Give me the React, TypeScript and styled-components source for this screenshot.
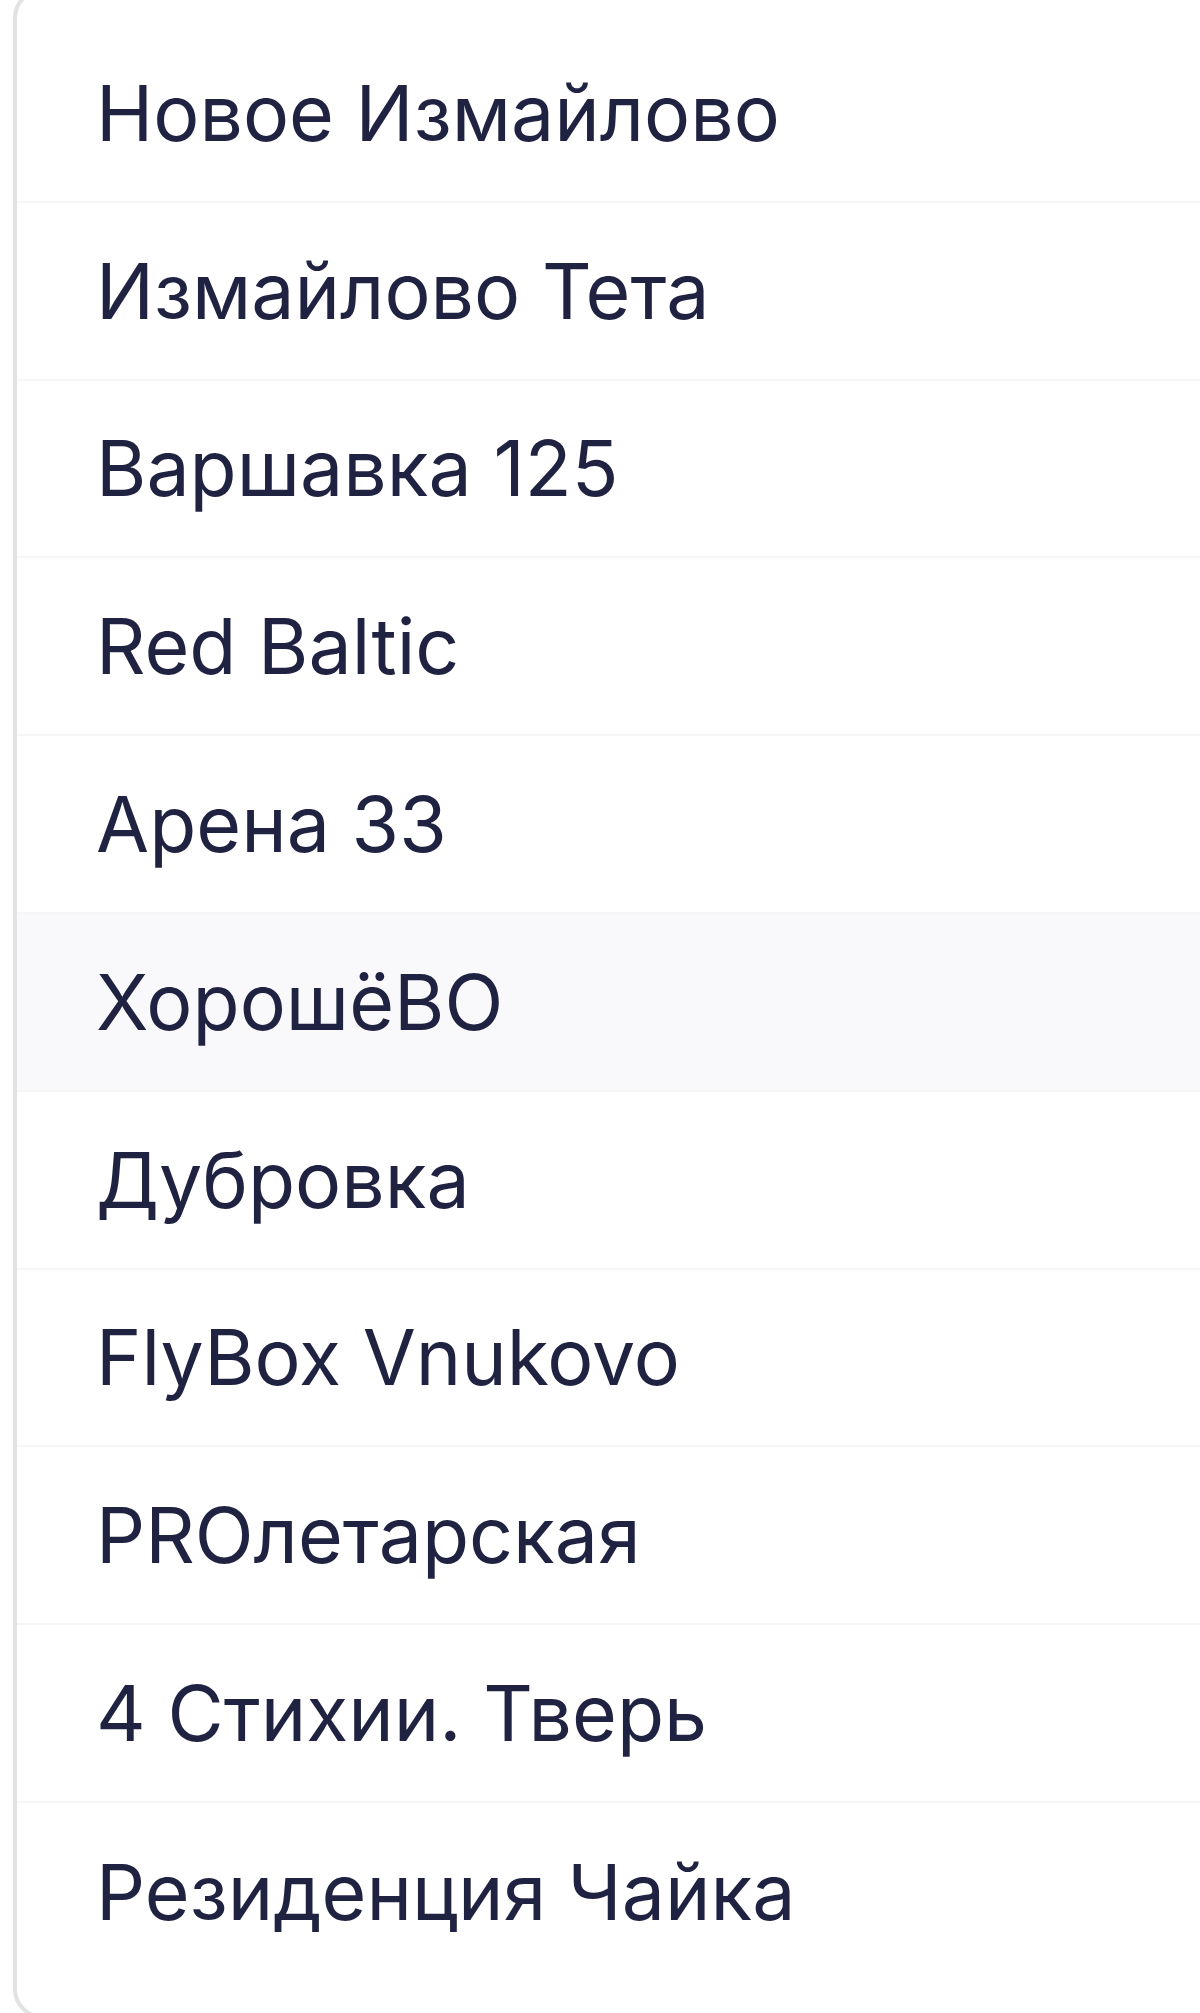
import styled, { createGlobalStyle } from 'styled-components'

const GlobalStyle = createGlobalStyle`
  html, body {
    margin: 0;
    padding: 0;
    background: #ffffff;
    overflow: hidden;
  }
  body {
    font-family: Inter, 'Noto Sans', sans-serif;
  }
`

const Page = styled.div`
  width: 1200px;
  height: 2013px;
  padding-left: 13px;
  box-sizing: border-box;
  overflow: hidden;
`

const Card = styled.ul`
  list-style: none;
  margin: -12px 0 0 0;
  padding: 33px 0 34px;
  width: 1260px;
  border: 4px solid #e2e2e4;
  border-radius: 30px;
  background: #ffffff;
  box-sizing: border-box;
`

const Row = styled.li<{ $active?: boolean; $last?: boolean }>`
  display: flex;
  align-items: center;
  height: 177.8px;
  box-sizing: border-box;
  padding-left: 79px;
  background: ${(p) => (p.$active ? '#f9f9fb' : 'transparent')};
  border-bottom: ${(p) => (p.$last ? 'none' : '2px solid #f6f6f7')};
  font-size: 77px;
  font-weight: 400;
  color: #1f2341;
  white-space: nowrap;
`

const places = [
  'Новое Измайлово',
  'Измайлово Тета',
  'Варшавка 125',
  'Red Baltic',
  'Арена 33',
  'ХорошёВО',
  'Дубровка',
  'FlyBox Vnukovo',
  'PROлетарская',
  '4 Стихии. Тверь',
  'Резиденция Чайка',
]

function App() {
  return (
    <Page>
      <GlobalStyle />
      <Card>
        {places.map((name, i) => (
          <Row key={name} $active={i === 5} $last={i === places.length - 1}>
            {name}
          </Row>
        ))}
      </Card>
    </Page>
  )
}

export default App
